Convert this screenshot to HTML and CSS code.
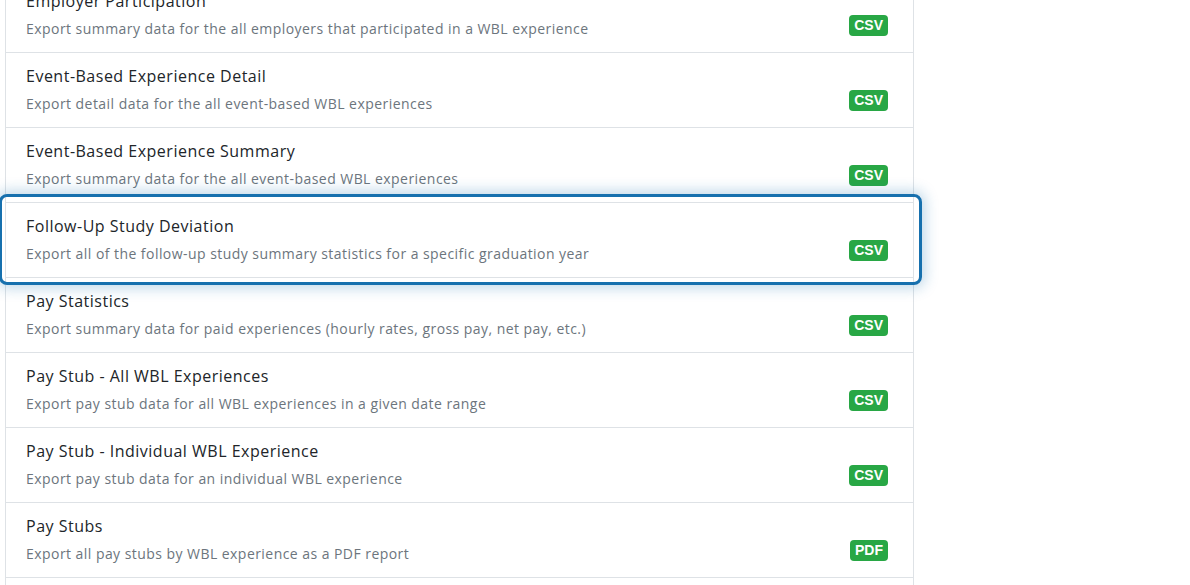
FILE: index.html
```html
<!DOCTYPE html>
<html lang="en">
<head>
<meta charset="UTF-8">
<meta name="viewport" content="width=device-width, initial-scale=1.0">
<title>Reports</title>
<link rel="stylesheet" href="styles.css">
</head>
<body>

<div class="report-list">
    <div class="report-row">
        <div class="report-text">
            <div class="report-title">Employer Participation</div>
            <div class="report-desc">Export summary data for the all employers that participated in a WBL experience</div>
        </div>
        <span class="badge">CSV</span>
    </div>
    <div class="report-row">
        <div class="report-text">
            <div class="report-title">Event-Based Experience Detail</div>
            <div class="report-desc">Export detail data for the all event-based WBL experiences</div>
        </div>
        <span class="badge">CSV</span>
    </div>
    <div class="report-row">
        <div class="report-text">
            <div class="report-title">Event-Based Experience Summary</div>
            <div class="report-desc">Export summary data for the all event-based WBL experiences</div>
        </div>
        <span class="badge">CSV</span>
    </div>
    <!-- selected row gets the focus ring -->
    <div class="report-row is-active">
        <div class="report-text">
            <div class="report-title">Follow-Up Study Deviation</div>
            <div class="report-desc">Export all of the follow-up study summary statistics for a specific graduation year</div>
        </div>
        <span class="badge">CSV</span>
    </div>
    <div class="report-row">
        <div class="report-text">
            <div class="report-title">Pay Statistics</div>
            <div class="report-desc">Export summary data for paid experiences (hourly rates, gross pay, net pay, etc.)</div>
        </div>
        <span class="badge">CSV</span>
    </div>
    <div class="report-row">
        <div class="report-text">
            <div class="report-title">Pay Stub - All WBL Experiences</div>
            <div class="report-desc">Export pay stub data for all WBL experiences in a given date range</div>
        </div>
        <span class="badge">CSV</span>
    </div>
    <div class="report-row">
        <div class="report-text">
            <div class="report-title">Pay Stub - Individual WBL Experience</div>
            <div class="report-desc">Export pay stub data for an individual WBL experience</div>
        </div>
        <span class="badge">CSV</span>
    </div>
    <div class="report-row">
        <div class="report-text">
            <div class="report-title">Pay Stubs</div>
            <div class="report-desc">Export all pay stubs by WBL experience as a PDF report</div>
        </div>
        <span class="badge">PDF</span>
    </div>
</div>

</body>
</html>
```

FILE: styles.css
```css
body {
    margin: 0;
    padding: 0 0 0 5px;
    background: #fff;
    font-family: 'Open Sans', sans-serif;
    overflow: hidden;
}

.report-list {
    width: 907px;
    margin-top: -22px;
    padding-bottom: 40px;
    border-left: 1px solid #dee2e6;
    border-right: 1px solid #dee2e6;
}

.report-row {
    position: relative;
    display: flex;
    justify-content: space-between;
    align-items: flex-start;
    height: 74px;
    box-sizing: content-box;
    padding: 0 25px 0 20px;
    border-bottom: 1px solid #dee2e6;
    background: #fff;
}

.report-text {
    padding-top: 12px;
}

.report-title {
    font-size: 16px;
    line-height: 22px;
    letter-spacing: 0.5px;
    color: #212529;
    margin-bottom: 6px;
}

.report-desc {
    font-size: 14px;
    line-height: 21px;
    letter-spacing: 0.45px;
    color: #6c757d;
}

.badge {
    margin-top: 37px;
    padding: 0 5px;
    height: 21px;
    line-height: 21px;
    border-radius: 4px;
    background: #28a745;
    color: #fff;
    font-family: 'Liberation Sans', Arial, sans-serif;
    font-weight: bold;
    font-size: 14px;
}

.report-row.is-active::after {
    content: '';
    position: absolute;
    top: -9px;
    bottom: -8px;
    left: -7px;
    right: -9px;
    border: 3px solid #1670ae;
    border-radius: 8px;
    box-shadow: 0 0 14px 3px rgba(22, 112, 174, 0.28);
    pointer-events: none;
    z-index: 2;
}
```
